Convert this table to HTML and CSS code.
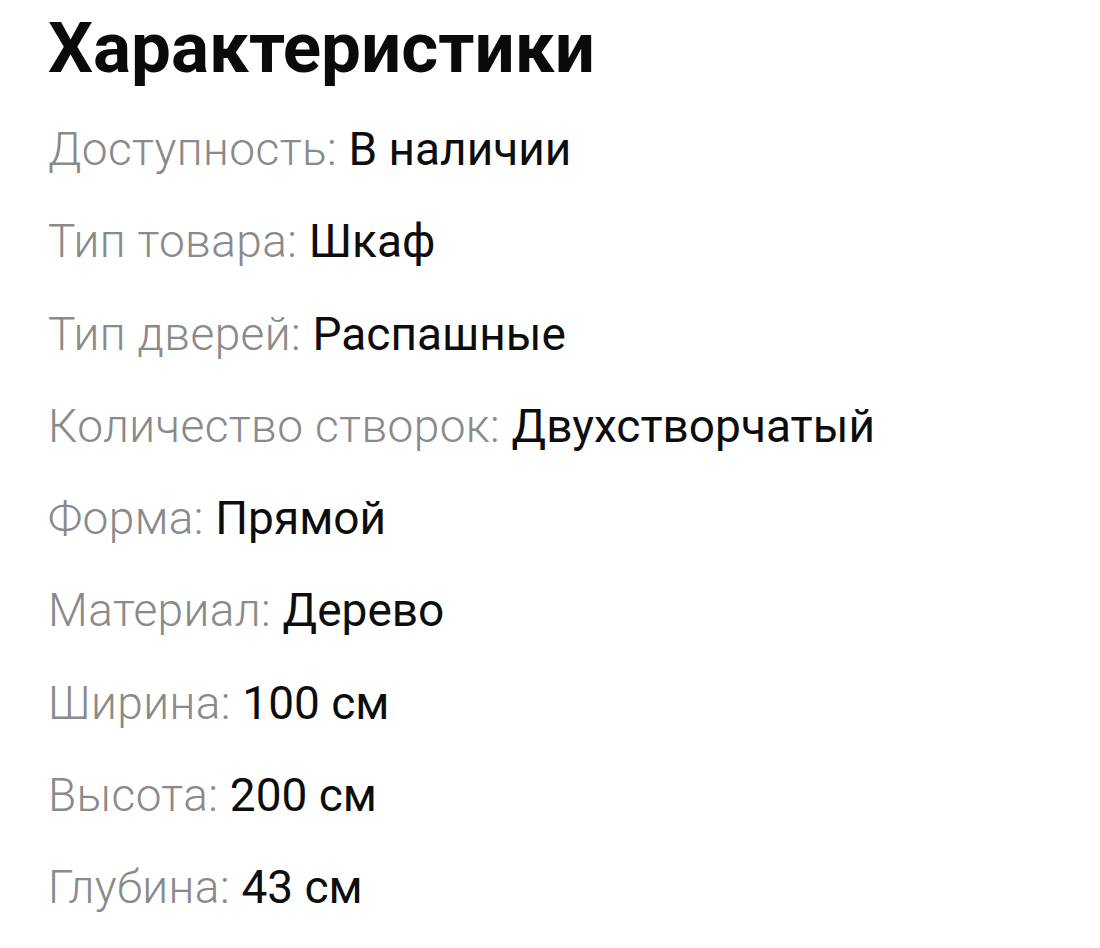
FILE: index.html
```html
<!DOCTYPE html>
<html lang="ru">
<head>
<meta charset="utf-8">
<link rel="stylesheet" href="styles.css">
</head>
<body>
<main class="specs">
  <h1 class="title">Характеристики</h1>
  <ul class="list">
    <li class="row"><span class="label">Доступность:</span> <span class="value">В наличии</span></li>
    <li class="row"><span class="label">Тип товара:</span> <span class="value">Шкаф</span></li>
    <li class="row"><span class="label">Тип дверей:</span> <span class="value">Распашные</span></li>
    <li class="row"><span class="label">Количество створок:</span> <span class="value">Двухстворчатый</span></li>
    <li class="row"><span class="label">Форма:</span> <span class="value">Прямой</span></li>
    <li class="row"><span class="label">Материал:</span> <span class="value">Дерево</span></li>
    <li class="row"><span class="label">Ширина:</span> <span class="value">100 см</span></li>
    <li class="row"><span class="label">Высота:</span> <span class="value">200 см</span></li>
    <li class="row"><span class="label">Глубина:</span> <span class="value">43 см</span></li>
  </ul>
</main>
</body>
</html>
```
FILE: styles.css
```css
html, body {
  margin: 0;
  padding: 0;
  background: #ffffff;
}
body {
  font-family: Roboto, "Noto Sans", sans-serif;
  color: #111;
}
.specs {
  padding: 8px 0 0 48px;
}
.title {
  margin: 0;
  font-family: Roboto, sans-serif;
  font-weight: 700;
  font-size: 71px;
  line-height: 80px;
  color: #0a0a0a;
}
.list {
  list-style: none;
  margin: 35px 0 0 0;
  padding: 0;
  display: flex;
  flex-direction: column;
  gap: 40.25px;
}
.row {
  font-size: 46px;
  line-height: 52px;
  white-space: nowrap;
}
.label {
  color: #8a8a8a;
  font-weight: 300;
  letter-spacing: 0.4px;
}
.value {
  color: #0d0d0d;
  font-weight: 400;
}
```
